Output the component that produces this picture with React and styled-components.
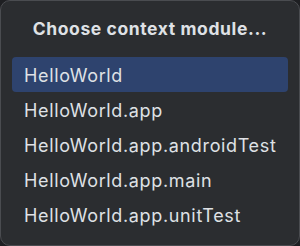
import React from 'react';
import styled, { createGlobalStyle } from 'styled-components';

const GlobalStyle = createGlobalStyle`
  html, body {
    margin: 0;
    padding: 0;
    background: #1e1f22;
  }
`;

const Popup = styled.div`
  box-sizing: border-box;
  width: 300px;
  height: 246px;
  background: #2b2d30;
  border: 1px solid #4a4c50;
  border-radius: 10px;
  font-family: Inter, "Noto Sans", sans-serif;
  display: flex;
  flex-direction: column;
`;

const Title = styled.div`
  color: #dfe1e5;
  font-size: 17.5px;
  font-weight: 700;
  letter-spacing: 0.6px;
  text-align: center;
  padding-top: 15px;
  height: 41px;
  line-height: 26px;
`;

const List = styled.ul`
  list-style: none;
  margin: 0;
  padding: 0 11px;
  display: flex;
  flex-direction: column;
`;

const Item = styled.li`
  box-sizing: border-box;
  height: 35px;
  padding: 3px 12px 0;
  line-height: 32px;
  border-radius: 4px;
  font-size: 18px;
  letter-spacing: 0.65px;
  color: #dfe1e5;
  background: ${(p) => (p.$selected ? '#2e436e' : 'transparent')};
`;

const modules = [
  'HelloWorld',
  'HelloWorld.app',
  'HelloWorld.app.androidTest',
  'HelloWorld.app.main',
  'HelloWorld.app.unitTest',
];

export default function App() {
  return (
    <>
      <GlobalStyle />
      <Popup>
        <Title>Choose context module...</Title>
        <List>
          {modules.map((m, i) => (
            <Item key={m} $selected={i === 0}>
              {m}
            </Item>
          ))}
        </List>
      </Popup>
    </>
  );
}
